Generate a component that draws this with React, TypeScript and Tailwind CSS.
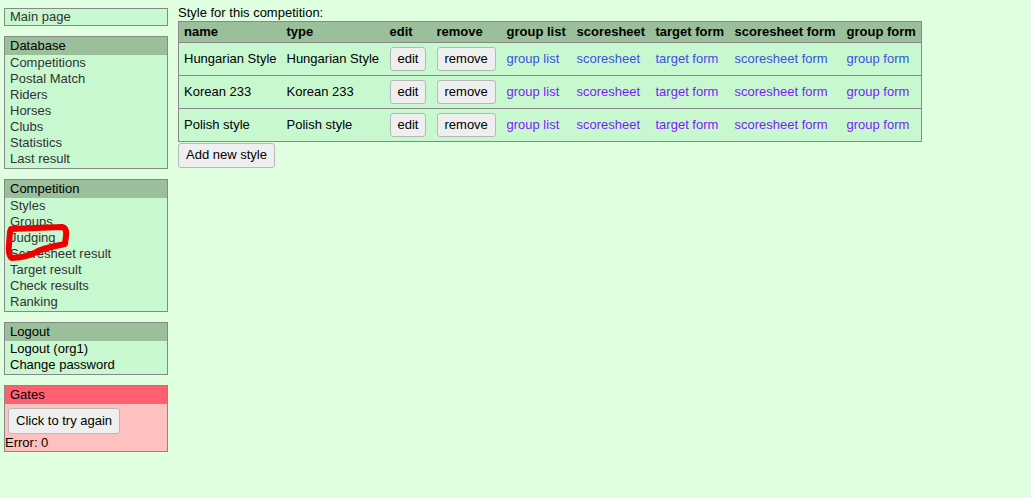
import type { ReactNode } from 'react'

type Style = { name: string; type: string; visited: boolean }

const styles: Style[] = [
  { name: 'Hungarian Style', type: 'Hungarian Style', visited: false },
  { name: 'Korean 233', type: 'Korean 233', visited: true },
  { name: 'Polish style', type: 'Polish style', visited: true },
]

const linkCols = ['group list', 'scoresheet', 'target form', 'scoresheet form', 'group form']

const headers: [string, string][] = [
  ['name', 'w-[103px]'],
  ['type', 'w-[103px]'],
  ['edit', 'w-[47px]'],
  ['remove', 'w-[70px]'],
  ['group list', 'w-[70px]'],
  ['scoresheet', 'w-[79px]'],
  ['target form', 'w-[79px]'],
  ['scoresheet form', 'w-[112px]'],
  ['group form', 'w-[80px]'],
]

function Box({ title, children, red }: { title: string; children: ReactNode; red?: boolean }) {
  return (
    <div className={`border border-[#888] ${red ? 'bg-[#ffc0c0]' : 'bg-[#c8f8d0]'}`}>
      <div className={`h-[18px] px-[5px] leading-[18px] text-black ${red ? 'bg-[#ff6070]' : 'bg-[#9abf9a]'}`}>{title}</div>
      {children}
    </div>
  )
}

function Item({ children }: { children: ReactNode }) {
  return <div className="px-[5px] leading-4 text-[#333]">{children}</div>
}

function Btn({ children }: { children: ReactNode }) {
  return (
    <button className="h-6 rounded-[3px] border border-[#b8b8b8] bg-[#efefef] px-[7px] text-[13px] text-black">
      {children}
    </button>
  )
}

export default function App() {
  return (
    <div className="relative flex min-h-[498px] gap-[10px] bg-[#e0ffe0] pl-1 pt-2 text-[13px] font-['Liberation_Sans',Arial,sans-serif]">
      {/* Sidebar */}
      <div className="flex w-[164px] flex-col gap-[10px]">
        <div className="border border-[#888] bg-[#c8f8d0] px-[5px] leading-4 text-[#333]">Main page</div>
        <Box title="Database">
          {['Competitions', 'Postal Match', 'Riders', 'Horses', 'Clubs', 'Statistics', 'Last result'].map(t => (
            <Item key={t}>{t}</Item>
          ))}
          <div className="h-px" />
        </Box>
        <Box title="Competition">
          {['Styles', 'Groups', 'Judging', 'Scoresheet result', 'Target result', 'Check results', 'Ranking'].map(t => (
            <Item key={t}>{t}</Item>
          ))}
          <div className="h-px" />
        </Box>
        <Box title="Logout">
          <div className="px-[5px] leading-4 text-black">Logout (org1)</div>
          <div className="px-[5px] leading-4 text-black">Change password</div>
          <div className="h-px" />
        </Box>
        <Box title="Gates" red>
          <div className="px-[3px] pt-[4px]">
            <button className="h-[26px] rounded-[3px] border border-[#b8b8b8] bg-[#efefef] px-[7px] text-[13px] text-black">
              Click to try again
            </button>
          </div>
          <div className="pt-px leading-4 text-black">Error: 0</div>
        </Box>
      </div>

      {/* Main */}
      <div className="-mt-[3px] flex flex-col items-start">
        <div className="leading-4 text-black">Style for this competition:</div>
        <table className="border-collapse border border-[#888] text-black">
          <thead>
            <tr className="bg-[#9abf9a] text-left">
              {headers.map(([h, w]) => (
                <th key={h} className={`h-5 px-[5px] font-bold ${w}`}>{h}</th>
              ))}
            </tr>
          </thead>
          <tbody>
            {styles.map(s => (
              <tr key={s.name} className="h-[33px] border-t border-[#888] bg-[#c8f8d0]">
                <td className="px-[5px]">{s.name}</td>
                <td className="px-[5px]">{s.type}</td>
                <td className="px-[5px]"><Btn>edit</Btn></td>
                <td className="px-[5px]"><Btn>remove</Btn></td>
                {linkCols.map(l => (
                  <td key={l} className="px-[5px]">
                    <a className={s.visited ? 'text-[#7a1cf8]' : 'text-[#3d4fe0]'}>{l}</a>
                  </td>
                ))}
              </tr>
            ))}
          </tbody>
        </table>
        <button className="mt-px h-[25px] rounded-[3px] border border-[#b8b8b8] bg-[#efefef] px-[7px] text-[13px] text-black">
          Add new style
        </button>
      </div>

      {/* red annotation */}
      <svg className="pointer-events-none absolute left-0 top-0" width="80" height="270">
        <path
          d="M 11 229 L 62 227 Q 67 228 66 236 L 65 244 Q 50 247 40 250 Q 30 257 12 258 Q 8 256 9 245 L 10 232 Z"
          fill="none"
          stroke="#ee0000"
          strokeWidth="6"
          strokeLinejoin="round"
        />
      </svg>
    </div>
  )
}
